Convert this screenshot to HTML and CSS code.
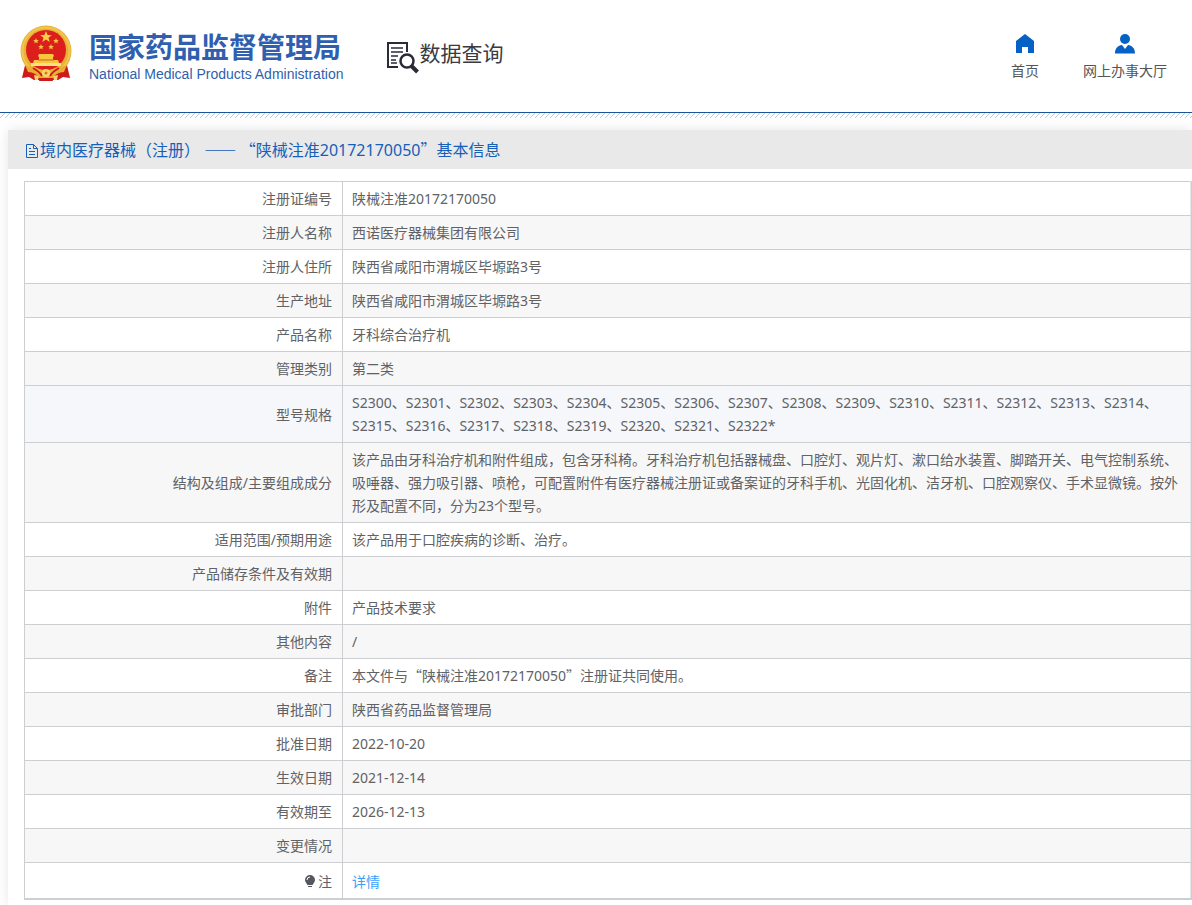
FILE: index.html
```html
<!DOCTYPE html>
<html lang="zh-CN">
<head>
    <meta charset="UTF-8">
    <meta name="viewport" content="width=device-width, initial-scale=1.0">
    <title>国家药品监督管理局 数据查询</title>
    <link rel="stylesheet" href="styles.css">
</head>
<body>
    <header class="header">
        <a class="logo" href="#">
            <svg class="emblem" viewBox="0 0 52 56" aria-hidden="true">
                <path d="M6 36 L2 53 L9 52 L14 55 L38 55 L43 52 L50 53 L46 36z" fill="#cf1a1c"/>
                <circle cx="26" cy="26" r="25.500" fill="#e9b236"/>
                <circle cx="26" cy="26" r="23.500" fill="none" stroke="#f0c650" stroke-width="2"/>
                <circle cx="26" cy="25" r="20" fill="#dc1f1c"/>
                <path d="M26 6l1.600 4 4.200.2-3.300 2.600 1.200 4.100-3.700-2.300-3.700 2.300 1.200-4.100-3.300-2.600 4.200-.2z" fill="#f8cf45"/>
                <g fill="#f5c542">
                    <path id="star" d="M16 13l.8 2 2 .1-1.500 1.300.5 2-1.800-1.100-1.800 1.100.5-2-1.500-1.300 2-.1z"/>
                    <use href="#star" x="20"/>
                    <use href="#star" x="5" y="6"/>
                    <use href="#star" x="15" y="6"/>
                </g>
                <path d="M19 29h14l1 2-1 1v3h5l1 3h-26l1-3h5v-3l-1-1z" fill="#f6c63f"/>
                <path d="M11 38h30v3H11z" fill="#fbe17a"/>
                <path d="M18 35h16" stroke="#c9651c" stroke-width="1"/>
                <path d="M5 40 Q14 43 20 48 L32 48 Q38 43 47 40 L44 47 Q36 47 33 53 L19 53 Q16 47 8 47z" fill="#e7ac31"/>
                <path d="M13 43 Q20 47 22 51 M39 43 Q32 47 30 51" stroke="#cf1a1c" stroke-width="2" fill="none"/>
                <circle cx="26" cy="48" r="4" fill="#f8d769"/>
                <circle cx="26" cy="48" r="1.500" fill="#cf7a1c"/>
                <path d="M14 50l5 1-1 4h-3zM38 50l-5 1 1 4h3z" fill="#f4cf6b"/>
                <path d="M20 53h12l1 3H19z" fill="#cf1a1c"/>
            </svg>
            <span class="logo-text">
                <span class="logo-cn">国家药品监督管理局</span>
                <span class="logo-en">National Medical Products Administration</span>
            </span>
        </a>
        <a class="query" href="#">
            <svg class="query-icon" viewBox="0 0 32 32" aria-hidden="true">
                <path d="M20 10V1H1v24h10" fill="none" stroke="#2b2b38" stroke-width="2"/>
                <path d="M4 6h12M4 10h12M4 14h7M4 18h5M4 21h6" stroke="#2b2b38" stroke-width="1.500"/>
                <circle cx="20" cy="19" r="6.500" fill="#fff" stroke="#2b2b38" stroke-width="2.500"/>
                <path d="M24.500 24l6 6" stroke="#2b2b38" stroke-width="4"/>
            </svg>
            <span>数据查询</span>
        </a>
        <nav class="nav">
            <a href="#">
                <svg viewBox="0 0 20 20" aria-hidden="true"><path d="M10 0L1 7v12h6v-6h6v6h6V7z" fill="#0561c4"/></svg>
                <span>首页</span>
            </a>
            <a href="#">
                <svg viewBox="0 0 20 20" aria-hidden="true">
                    <circle cx="10" cy="5" r="5" fill="#0561c4"/>
                    <path d="M0 19.500C0 14 3 11.500 7 11l3 4 3-4c4 .5 7 3 7 8.500z" fill="#0561c4"/>
                </svg>
                <span>网上办事大厅</span>
            </a>
        </nav>
    </header>
    <div class="stripes"></div>

    <main class="card">
        <h1 class="title">
            <svg viewBox="0 0 16 16" aria-hidden="true">
                <path d="M2.500 1.500h7l4 4v9h-11zM9.500 1.500v4h4M5 5.500h2M5 8.500h6M5 11.500h6" fill="none" stroke="#175fb8"/>
            </svg>
            <span>境内医疗器械（注册） <span class="mark">—— “</span>陕械注准20172170050<span class="mark">”</span>基本信息</span>
        </h1>

        <div class="table-wrap">
            <table>
                <tr><th scope="row">注册证编号</th><td>陕械注准20172170050</td></tr>
                <tr><th scope="row">注册人名称</th><td>西诺医疗器械集团有限公司</td></tr>
                <tr><th scope="row">注册人住所</th><td>陕西省咸阳市渭城区毕塬路3号</td></tr>
                <tr><th scope="row">生产地址</th><td>陕西省咸阳市渭城区毕塬路3号</td></tr>
                <tr><th scope="row">产品名称</th><td>牙科综合治疗机</td></tr>
                <tr><th scope="row">管理类别</th><td>第二类</td></tr>
                <tr class="active"><th scope="row">型号规格</th><td>S2300、S2301、S2302、S2303、S2304、S2305、S2306、S2307、S2308、S2309、S2310、S2311、S2312、S2313、S2314、S2315、S2316、S2317、S2318、S2319、S2320、S2321、S2322*</td></tr>
                <tr><th scope="row">结构及组成/主要组成成分</th><td>该产品由牙科治疗机和附件组成，包含牙科椅。牙科治疗机包括器械盘、口腔灯、观片灯、漱口给水装置、脚踏开关、电气控制系统、吸唾器、强力吸引器、喷枪，可配置附件有医疗器械注册证或备案证的牙科手机、光固化机、洁牙机、口腔观察仪、手术显微镜。按外形及配置不同，分为23个型号。</td></tr>
                <tr><th scope="row">适用范围/预期用途</th><td>该产品用于口腔疾病的诊断、治疗。</td></tr>
                <tr><th scope="row">产品储存条件及有效期</th><td></td></tr>
                <tr><th scope="row">附件</th><td>产品技术要求</td></tr>
                <tr><th scope="row">其他内容</th><td>/</td></tr>
                <tr><th scope="row">备注</th><td>本文件与<span class="mark">“</span>陕械注准20172170050<span class="mark">”</span>注册证共同使用。</td></tr>
                <tr><th scope="row">审批部门</th><td>陕西省药品监督管理局</td></tr>
                <tr><th scope="row">批准日期</th><td>2022-10-20</td></tr>
                <tr><th scope="row">生效日期</th><td>2021-12-14</td></tr>
                <tr><th scope="row">有效期至</th><td>2026-12-13</td></tr>
                <tr><th scope="row">变更情况</th><td></td></tr>
                <tr class="note">
                    <th scope="row">
                        <svg viewBox="0 0 12 14" aria-hidden="true">
                            <path d="M6 1a5 5 0 0 0-5 5c0 2 1.500 3 2.500 5h5C9.500 9 11 8 11 6a5 5 0 0 0-5-5zM4 12h4v1H4z" fill="#55585e"/>
                            <path d="M3 6a3 3 0 0 1 3-3" fill="none" stroke="#fff"/>
                        </svg>注</th>
                    <td><a href="#">详情</a></td>
                </tr>
            </table>
        </div>
    </main>
</body>
</html>
```
FILE: styles.css
```css
* {
    box-sizing: border-box;
}
body {
    margin: 0;
    min-height: 100vh;
    display: flex;
    flex-direction: column;
    background: #fff;
    color: #606266;
    font-family: "Noto Sans", "Noto Sans CJK SC", sans-serif;
    font-size: 14px;
    line-height: 23px;
    overflow-x: hidden;
}
a {
    color: #409eff;
    text-decoration: none;
}

/* header */
.header {
    display: flex;
    align-items: center;
    height: 113px;
    padding: 0 25px 6px 20px;
    border-bottom: 1px solid #1c5597;
}
.logo {
    display: flex;
    align-items: center;
    gap: 17px;
    color: #2f5fae;
}
.emblem {
    width: 52px;
    height: 56px;
}
.logo-text {
    display: flex;
    flex-direction: column;
    padding-top: 7px;
}
.logo-cn {
    font-size: 28px;
    font-weight: bold;
    line-height: 34px;
}
.logo-en {
    font-family: "Liberation Sans", Arial, sans-serif;
    font-size: 14px;
    line-height: 20px;
}
.query {
    display: flex;
    align-items: center;
    margin-left: 44px;
    color: #3a3a40;
    font-size: 21px;
}
.query-icon {
    width: 32px;
    height: 32px;
    margin-top: 10px;
}
.nav {
    display: flex;
    gap: 44px;
    margin-left: auto;
    padding-top: 10px;
}
.nav a {
    display: flex;
    flex-direction: column;
    align-items: center;
    gap: 5px;
    color: #555;
}
.nav svg {
    width: 20px;
    height: 20px;
}
.stripes {
    height: 5px;
    background: linear-gradient(135deg, transparent 45%, #b5cfdf 45%, #b5cfdf 55%, transparent 55%) 0 0 / 5px 5px;
}

/* content */
.card {
    flex: 1;
    margin: 12px 0 0 8px;
    padding-bottom: 5px;
    background: #fff;
    box-shadow: 0 0 12px rgba(0, 0, 0, 0.1);
}
.title {
    display: flex;
    align-items: center;
    height: 39px;
    margin: 0;
    padding: 2px 16px 0;
    background: #e9e9e9;
    color: #175fb8;
    font-size: 16px;
    font-weight: normal;
}
.title svg {
    width: 16px;
    height: 16px;
}
/* full-width quotes and dashes */
.mark {
    font-family: "Noto Sans CJK SC", sans-serif;
    line-height: 1;
}
.table-wrap {
    margin: 12px 0 0 16px;
    border-right: 1px solid #ccced2;
    border-bottom: 1px solid #ccced2;
}
table {
    width: 100%;
    table-layout: fixed;
    border-collapse: collapse;
}
th, td {
    padding: 5px 10px 5px 9px;
    border: 1px solid #ccced2;
    text-align: left;
}
th {
    width: 318px;
    font-weight: normal;
    text-align: right;
}
td {
    border-right-color: #e6e7ea;
}
tr:nth-child(even) {
    background: #f7f7f7;
}
tr.active {
    background: #f5f7fb;
}
.note th, .note td {
    padding-top: 7px;
}
.note svg {
    width: 12px;
    height: 14px;
    margin-right: 2px;
    vertical-align: -1px;
}
```
